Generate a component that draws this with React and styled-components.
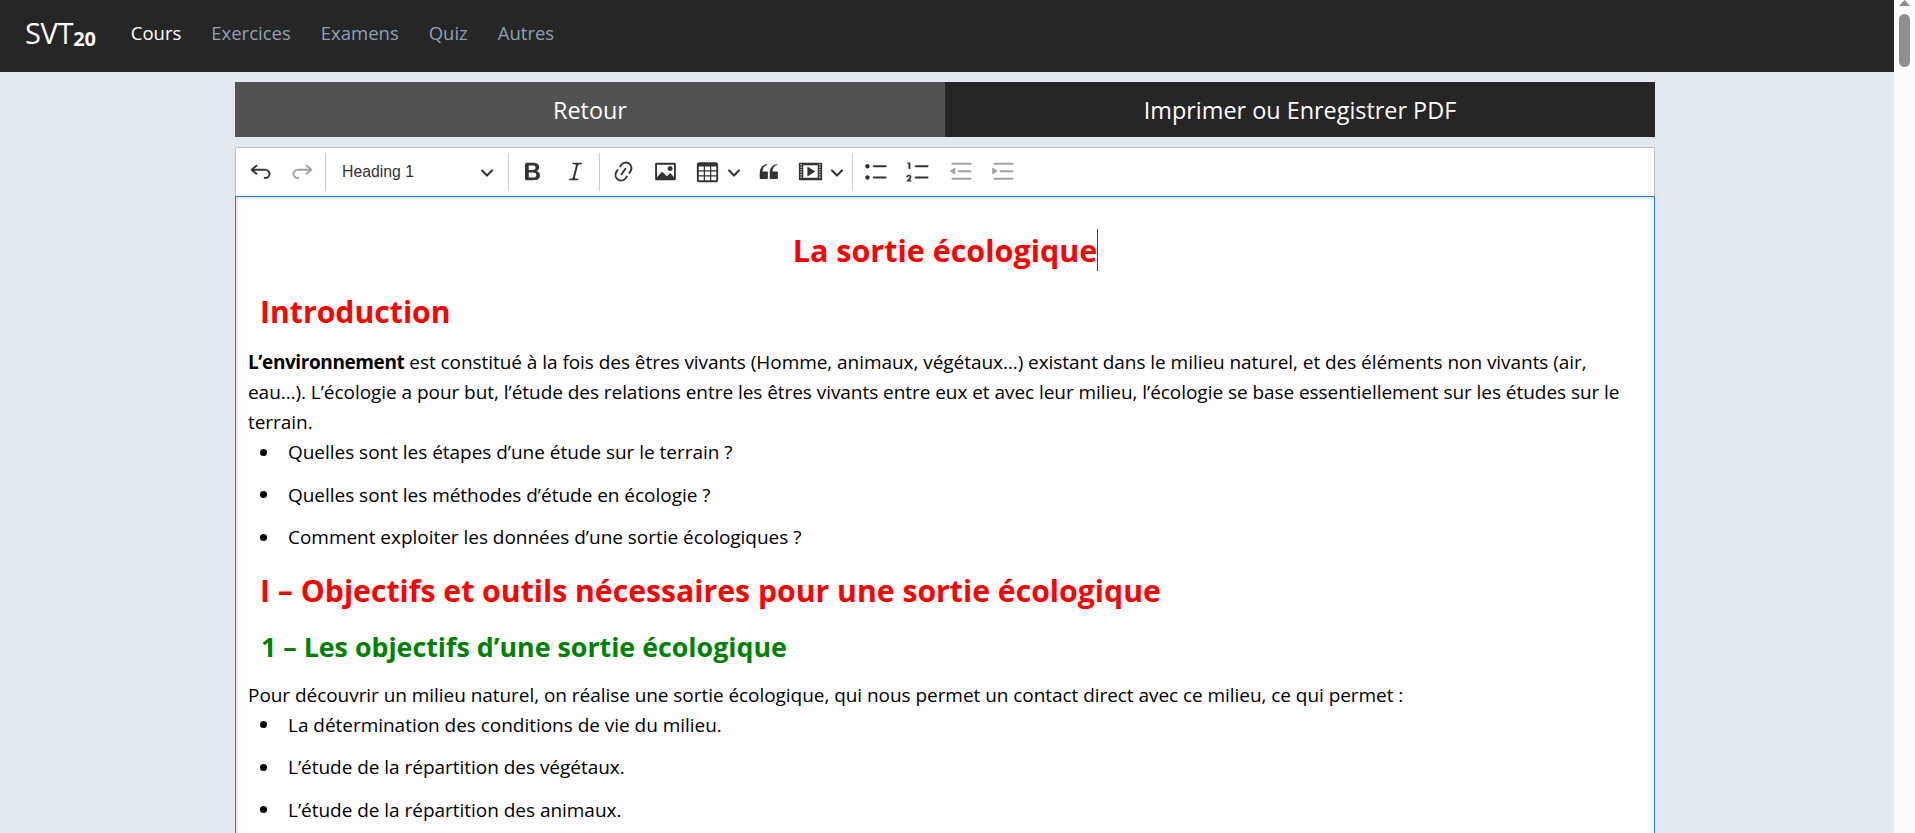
import React from "react";
import styled, { createGlobalStyle } from "styled-components";

const FONT = `"Open Sans", "Noto Sans", sans-serif`;

const Global = createGlobalStyle`
  html, body { margin: 0; padding: 0; height: 100%; overflow: hidden; }
  body { background: #e2e8f0; font-family: ${FONT}; }
  #root { height: 100%; }
  * { box-sizing: border-box; }
`;

const Shell = styled.div`
  display: flex;
  height: 833px;
  width: 1915px;
  overflow: hidden;
`;
const Page = styled.div`
  flex: 1;
  min-width: 0;
  background: #e2e8f0;
`;
const Navbar = styled.nav`
  height: 72px;
  background: #262626;
  display: flex;
  align-items: center;
  padding: 0 25px 8px;
`;
const Brand = styled.a`
  color: #fff;
  font-size: 29px;
  letter-spacing: -0.3px;
  margin-right: 35px;
  b { font-size: 20px; letter-spacing: -0.2px; position: relative; top: 2px; }
`;
const NavLink = styled.a`
  color: ${(p) => (p.$active ? "#fff" : "#8fa0b3")};
  font-size: 18.5px;
  margin-right: 30px;
`;
const Container = styled.main`
  width: 1420px;
  margin: 10px 0 0 235px;
`;
const Actions = styled.div`
  display: grid;
  grid-template-columns: 1fr 1fr;
  height: 55px;
`;
const ActionButton = styled.button`
  border: 0;
  color: #fff;
  background: ${(p) => (p.$dark ? "#262626" : "#525252")};
  font-family: ${FONT};
  font-size: 23.4px;
`;
const Toolbar = styled.div`
  margin-top: 10px;
  height: 49px;
  background: #fff;
  border: 1px solid #c4c4c4;
  border-bottom: 0;
  border-radius: 2px 2px 0 0;
  display: flex;
  align-items: center;
  padding: 0 0 1px 3px;
`;
const ToolButton = styled.span`
  width: ${(p) => p.$w || 42}px;
  height: 40px;
  flex: none;
  display: flex;
  align-items: center;
  justify-content: center;
  margin-right: ${(p) => p.$mr || 0}px;
  color: #333;
  opacity: ${(p) => (p.$off ? 0.45 : 1)};
  svg { flex: none; }
`;
const Sep = styled.span`
  width: 1px;
  height: 38px;
  background: #ccc;
  flex: none;
  margin: 0 ${(p) => p.$r ?? 2}px 0 ${(p) => p.$l ?? 2}px;
`;
const HeadingSelect = styled.span`
  width: 181px;
  flex: none;
  display: flex;
  align-items: center;
  justify-content: space-between;
  padding: 0 13px 0 16px;
  font-family: "Liberation Sans", Arial, sans-serif;
  font-size: 15.8px;
  color: #333;
`;
const Editor = styled.div`
  height: 640px;
  background: #fff;
  border: 1px solid #2977ff;
  border-bottom: 0;
  padding: 0 12px;
  color: #000;
  overflow: hidden;
  box-shadow: inset 2px 2px 3px rgba(0, 0, 0, 0.1);
`;
const Title = styled.h1`
  margin: 33px 0 0;
  font-size: 30.5px;
  line-height: 40px;
  font-weight: 700;
  color: #f00;
  text-align: center;
`;
const Caret = styled.span`
  display: inline-block;
  width: 1px;
  height: 42px;
  background: #d0021b;
  vertical-align: middle;
  margin-right: -1px;
  position: relative;
  top: -4px;
`;
const SectionTitle = styled.h2`
  margin: ${(p) => p.$top}px 0 0 12px;
  font-size: 30.2px;
  line-height: 42px;
  font-weight: 700;
  color: #f00;
`;
const SubTitle = styled.h3`
  margin: 17px 0 0 13px;
  font-size: 26.8px;
  line-height: 36px;
  font-weight: 700;
  color: #008000;
`;
const Para = styled.p`
  margin: ${(p) => p.$top}px 0 0;
  font-size: 19px;
  line-height: 30px;
  letter-spacing: -0.05px;
  strong { letter-spacing: -0.4px; }
`;
const List = styled.ul`
  margin: 0;
  padding: 0 0 0 40px;
  list-style: none;
`;
const Item = styled.li`
  position: relative;
  font-size: 19px;
  line-height: 30px;
  letter-spacing: -0.03px;
  margin-bottom: 12.5px;
  &::before {
    content: "";
    position: absolute;
    left: -28px;
    top: 11.5px;
    width: 7px;
    height: 7px;
    border-radius: 50%;
    background: #000;
  }
`;
const Scrollbar = styled.aside`
  width: 21px;
  flex: none;
  background: #fcfcfc;
  position: relative;
  display: flex;
  flex-direction: column;
  align-items: center;
`;
const Thumb = styled.div`
  width: 11px;
  height: 53px;
  margin-top: 14px;
  background: #8f8f8f;
  border-radius: 6px;
`;
const ArrowUp = styled.svg`
  position: absolute;
  top: 0;
  left: 5px;
`;

const Icon = ({ d, size = 25, box = 20 }) => (
  <svg width={size} height={size} viewBox={`0 0 ${box} ${box}`} fill="currentColor">
    <path d={d} />
  </svg>
);
const ARROW = "M.941 4.523a.75.75 0 1 1 1.06-1.06l3.006 3.005 3.005-3.005a.75.75 0 1 1 1.06 1.06l-3.549 3.55a.75.75 0 0 1-1.168-.136L.941 4.523z";
const P = {
  undo: "m5.042 9.367 2.189 1.837a.75.75 0 0 1-.965 1.149l-3.788-3.18a.747.747 0 0 1-.21-.284.75.75 0 0 1 .17-.945L6.23 4.762a.75.75 0 1 1 .964 1.15L4.863 7.866h8.917A.75.75 0 0 1 14 7.9a4 4 0 1 1-1.477 7.718l.344-1.489a2.5 2.5 0 1 0 1.094-4.73l.008-.032H5.042z",
  redo: "m14.958 9.367-2.189 1.837a.75.75 0 0 0 .965 1.149l3.788-3.18a.747.747 0 0 0 .21-.284.75.75 0 0 0-.17-.945L13.77 4.762a.75.75 0 1 0-.964 1.15l2.331 1.955H6.22A.75.75 0 0 0 6 7.9a4 4 0 1 0 1.477 7.718l-.344-1.489A2.5 2.5 0 1 1 6.039 9.4l-.008-.032h8.927z",
  bold: "M10.187 17H5.773c-.637 0-1.092-.138-1.364-.415-.273-.277-.409-.718-.409-1.323V4.738c0-.617.14-1.062.419-1.332.279-.27.73-.406 1.354-.406h4.68c.69 0 1.288.041 1.793.124.506.083.96.242 1.36.478.341.197.644.447.906.75a3.262 3.262 0 0 1 .808 2.162c0 1.401-.722 2.426-2.167 3.075C15.05 10.175 16 11.315 16 13.01a3.756 3.756 0 0 1-2.296 3.504 6.1 6.1 0 0 1-1.517.377c-.571.073-1.238.11-2 .11zm-.217-6.217H7v4.087h3.069c1.977 0 2.965-.69 2.965-2.072 0-.707-.256-1.22-.768-1.537-.512-.319-1.277-.478-2.296-.478zM7 5.13v3.619h2.606c.729 0 1.292-.067 1.69-.2a1.6 1.6 0 0 0 .91-.765c.165-.267.247-.566.247-.897 0-.707-.26-1.176-.778-1.409-.519-.232-1.31-.348-2.375-.348H7z",
  italic: "m9.586 14.633.021.004c-.036.335.095.655.393.962.082.083.173.15.274.201h1.474a.6.6 0 1 1 0 1.2H5.304a.6.6 0 0 1 0-1.2h1.15c.474-.07.809-.182 1.005-.334.157-.122.291-.32.404-.597l2.416-9.55a1.053 1.053 0 0 0-.281-.823 1.12 1.12 0 0 0-.442-.296H8.15a.6.6 0 0 1 0-1.2h6.443a.6.6 0 1 1 0 1.2h-1.195c-.376.056-.65.155-.823.296-.215.175-.423.439-.623.79l-2.366 9.347z",
  link: "m11.077 15 .991-1.416a.75.75 0 1 1 1.229.86l-1.148 1.64a.748.748 0 0 1-.217.206 5.251 5.251 0 0 1-8.503-5.955.741.741 0 0 1 .12-.274l1.147-1.639a.75.75 0 1 1 1.228.86L4.933 10.7l.006.003a3.75 3.75 0 0 0 6.132 4.294l.006.004zm5.494-5.335a.748.748 0 0 1-.12.274l-1.147 1.639a.75.75 0 1 1-1.228-.86l.86-1.23a3.75 3.75 0 0 0-6.144-4.301l-.86 1.229a.75.75 0 0 1-1.229-.86l1.148-1.64a.748.748 0 0 1 .217-.206 5.251 5.251 0 0 1 8.503 5.955zm-4.563-2.532a.75.75 0 0 1 .184 1.045l-3.155 4.505a.75.75 0 1 1-1.229-.86l3.155-4.506a.75.75 0 0 1 1.045-.184z",
  image: "M6.91 10.54c.26-.23.64-.21.88.03l3.36 3.14 2.23-2.06a.64.64 0 0 1 .87 0l2.52 2.97V4.5H3.2v10.12l3.71-4.08zm10.27-7.51c.6 0 1.09.47 1.09 1.05v11.84c0 .59-.49 1.06-1.09 1.06H2.79c-.6 0-1.09-.47-1.09-1.06V4.08c0-.58.49-1.05 1.09-1.05h14.39zm-5.22 5.56a1.96 1.96 0 1 1 3.4-1.96 1.96 1.96 0 0 1-3.4 1.96z",
  table: "M3 6v3h4V6H3zm0 4v3h4v-3H3zm0 4v3h4v-3H3zm5 3h4v-3H8v3zm5 0h4v-3h-4v3zm4-4v-3h-4v3h4zm0-4V6h-4v3h4zm1.5 8a1.5 1.5 0 0 1-1.5 1.5H3A1.5 1.5 0 0 1 1.5 17V4c.222-.863 1.068-1.5 2-1.5h13c.932 0 1.778.637 2 1.5v13zM12 13v-3H8v3h4zm0-4V6H8v3h4z",
  quote: "M3 10.423a6.5 6.5 0 0 1 6.056-6.408l.038.67C6.448 5.423 5.354 7.663 5.22 10H9c.552 0 .5.432.5.986v4.511c0 .554-.448.503-1 .503h-5c-.552 0-.5-.449-.5-1.003v-4.574zm8 0a6.5 6.5 0 0 1 6.056-6.408l.038.67c-2.646.739-3.74 2.979-3.873 5.315H17c.552 0 .5.432.5.986v4.511c0 .554-.448.503-1 .503h-5c-.552 0-.5-.449-.5-1.003v-4.574z",
  media: "M1.3 3h17.4c.4 0 .6.2.6.6v12.8c0 .4-.2.6-.6.6H1.3c-.4 0-.6-.2-.6-.6V3.6c0-.4.2-.6.6-.6zM4.2 5v10h11.6V5H4.2zM2 4v1h1V4H2zm0 2v1h1V6H2zm0 2v1h1V8H2zm0 2v1h1v-1H2zm0 2v1h1v-1H2zm0 2v1h1v-1H2zM17 4v1h1V4h-1zm0 2v1h1V6h-1zm0 2v1h1V8h-1zm0 2v1h1v-1h-1zm0 2v1h1v-1h-1zm0 2v1h1v-1h-1zM7.5 6.7a.4.4 0 0 1 .6-.35l5.1 3.25a.4.4 0 0 1 0 .7l-5.1 3.25a.4.4 0 0 1-.6-.35V6.7z",
  bullet: "M7 5.75c0 .414.336.75.75.75h9.5a.75.75 0 1 0 0-1.5h-9.5a.75.75 0 0 0-.75.75zm-6 0C1 4.784 1.777 4 2.75 4c.966 0 1.75.777 1.75 1.75 0 .966-.777 1.75-1.75 1.75C1.784 7.5 1 6.723 1 5.75zm6 9c0 .414.336.75.75.75h9.5a.75.75 0 1 0 0-1.5h-9.5a.75.75 0 0 0-.75.75zm-6 0c0-.966.777-1.75 1.75-1.75.966 0 1.75.777 1.75 1.75 0 .966-.777 1.75-1.75 1.75-.966 0-1.75-.777-1.75-1.75z",
  number: "M7 5.75c0 .414.336.75.75.75h9.5a.75.75 0 1 0 0-1.5h-9.5a.75.75 0 0 0-.75.75zM3.5 3v5H2V3.7H1v-1h2.5V3zM.343 17.857l2.59-3.257H2.92a.6.6 0 1 0-1.04 0H.302a2 2 0 1 1 3.995 0h-.001c-.048.405-.16.734-.333.988-.175.254-.59.692-1.244 1.312H4.3v1h-4l.043-.043zM7 14.75a.75.75 0 0 1 .75-.75h9.5a.75.75 0 1 1 0 1.5h-9.5a.75.75 0 0 1-.75-.75z",
  outdent: "M2 3.75c0 .414.336.75.75.75h14.5a.75.75 0 1 0 0-1.5H2.75a.75.75 0 0 0-.75.75zm5 6c0 .414.336.75.75.75h9.5a.75.75 0 1 0 0-1.5h-9.5a.75.75 0 0 0-.75.75zM2.75 16.5h14.5a.75.75 0 1 0 0-1.5H2.75a.75.75 0 1 0 0 1.5zm1.618-9.55L.98 9.358a.4.4 0 0 0 .013.661l3.39 2.207A.4.4 0 0 0 5 11.892V7.275a.4.4 0 0 0-.632-.326z",
  indent: "M2 3.75c0 .414.336.75.75.75h14.5a.75.75 0 1 0 0-1.5H2.75a.75.75 0 0 0-.75.75zm5 6c0 .414.336.75.75.75h9.5a.75.75 0 1 0 0-1.5h-9.5a.75.75 0 0 0-.75.75zM2.75 16.5h14.5a.75.75 0 1 0 0-1.5H2.75a.75.75 0 1 0 0 1.5zM1.632 6.95 5.02 9.358a.4.4 0 0 1-.013.661l-3.39 2.207A.4.4 0 0 1 1 11.892V7.275a.4.4 0 0 1 .632-.326z",
};

const Tool = ({ name, off, w }) => (
  <ToolButton $off={off} $w={w}><Icon d={P[name]} /></ToolButton>
);
const Chevron = ({ mr }) => (
  <ToolButton $w={12} $mr={mr}><Icon d={ARROW} size={14} box={10} /></ToolButton>
);

export default function App() {
  return (
    <Shell>
      <Global />
      <Page>
        <Navbar>
          <Brand>SVT<b>20</b></Brand>
          <NavLink $active>Cours</NavLink>
          <NavLink>Exercices</NavLink>
          <NavLink>Examens</NavLink>
          <NavLink>Quiz</NavLink>
          <NavLink>Autres</NavLink>
        </Navbar>
        <Container>
          <Actions>
            <ActionButton>Retour</ActionButton>
            <ActionButton $dark>Imprimer ou Enregistrer PDF</ActionButton>
          </Actions>
          <Toolbar>
            <Tool name="undo" />
            <Tool name="redo" off />
            <Sep $r={0} />
            <HeadingSelect>Heading 1 <Icon d={ARROW} size={14} box={10} /></HeadingSelect>
            <Sep $l={1} />
            <Tool name="bold" w={43} />
            <Tool name="italic" w={43} />
            <Sep />
            <Tool name="link" />
            <Tool name="image" />
            <Tool name="table" />
            <Chevron mr={7} />
            <Tool name="quote" />
            <Tool name="media" />
            <Chevron mr={0} />
            <Sep $l={9} />
            <Tool name="bullet" />
            <Tool name="number" w={43} />
            <Tool name="outdent" off />
            <Tool name="indent" off />
          </Toolbar>
          <Editor>
            <Title>La sortie écologique<Caret /></Title>
            <SectionTitle $top={16.5}>Introduction</SectionTitle>
            <Para $top={14}>
              <strong>L’environnement</strong> est constitué à la fois des êtres vivants (Homme, animaux, végétaux…) existant dans le milieu naturel, et des éléments non vivants (air, eau…). L’écologie a pour but, l’étude des relations entre les êtres vivants entre eux et avec leur milieu, l’écologie se base essentiellement sur les études sur le terrain.
            </Para>
            <List>
              <Item>Quelles sont les étapes d’une étude sur le terrain ?</Item>
              <Item>Quelles sont les méthodes d’étude en écologie ?</Item>
              <Item>Comment exploiter les données d’une sortie écologiques ?</Item>
            </List>
            <SectionTitle $top={17.5}>I – Objectifs et outils nécessaires pour une sortie écologique</SectionTitle>
            <SubTitle>1 – Les objectifs d’une sortie écologique</SubTitle>
            <Para $top={15}>Pour découvrir un milieu naturel, on réalise une sortie écologique, qui nous permet un contact direct avec ce milieu, ce qui permet :</Para>
            <List>
              <Item>La détermination des conditions de vie du milieu.</Item>
              <Item>L’étude de la répartition des végétaux.</Item>
              <Item>L’étude de la répartition des animaux.</Item>
            </List>
          </Editor>
        </Container>
      </Page>
      <Scrollbar>
        <ArrowUp width="11" height="6" viewBox="0 0 11 6"><path d="M5.5 0 11 6H0z" fill="#8f8f8f" /></ArrowUp>
        <Thumb />
      </Scrollbar>
    </Shell>
  );
}
